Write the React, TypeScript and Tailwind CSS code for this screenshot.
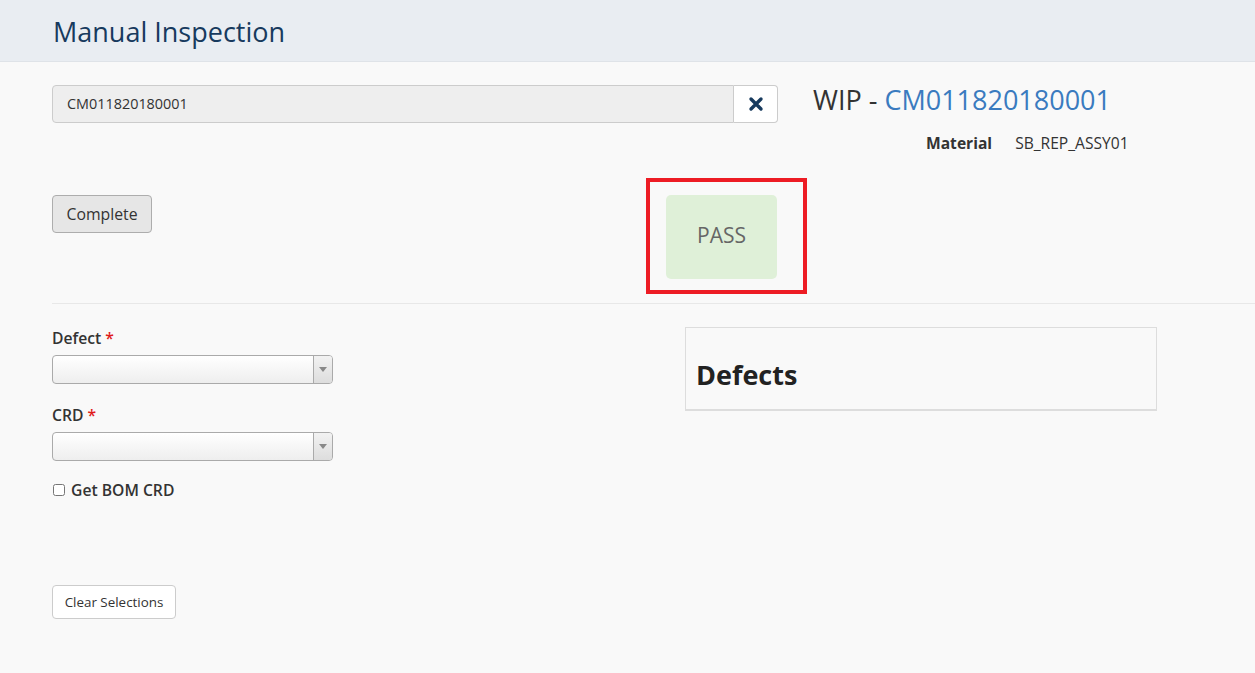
import { useState } from 'react'

function Caret() {
  return (
    <svg width="8" height="5" viewBox="0 0 8 5" className="fill-[#888]">
      <path d="M0 0h8L4 5z" />
    </svg>
  )
}

function ComboBox() {
  return (
    <div className="flex h-[29px] w-[281px] overflow-hidden rounded-[4px] border border-[#aaa] bg-gradient-to-b from-white to-[#eee]">
      <div className="flex-1" />
      <div className="flex w-[19px] items-center justify-center border-l border-[#aaa] bg-gradient-to-b from-[#f2f2f2] to-[#ddd]">
        <Caret />
      </div>
    </div>
  )
}

export default function App() {
  const [wip, setWip] = useState('CM011820180001')
  const [bom, setBom] = useState(false)

  return (
    <div className="min-h-screen bg-[#f9f9f9] font-['Open_Sans',sans-serif] text-[#333]">
      <header className="flex h-[62px] items-center border-b border-[#dfe3e8] bg-[#e9edf2] pl-[53px] pt-[2px]">
        <h1 className="text-[27px] leading-none text-[#173a5e]">Manual Inspection</h1>
      </header>

      <div className="pl-[52px]">
        <div className="flex pt-[23px]">
          <div className="w-[726px]">
            <div className="flex h-[38px]">
              <input
                value={wip}
                onChange={(e) => setWip(e.target.value)}
                className="flex-1 rounded-l-[4px] border border-[#ccc] bg-[#eee] px-[14px] text-[14.4px] text-[#333] outline-none"
              />
              <button className="flex w-[44px] items-center justify-center rounded-r-[4px] border border-l-0 border-[#ccc] bg-white">
                <svg width="16" height="16" viewBox="0 0 16 16">
                  <path d="M3 3l10 10M13 3L3 13" stroke="#173a5e" strokeWidth="3.4" strokeLinecap="round" />
                </svg>
              </button>
            </div>

            <div className="mt-[72px] flex items-start">
              <button className="h-[38px] w-[100px] rounded-[4px] border border-[#adadad] bg-[#e6e6e6] pt-[2px] text-[15.8px] text-[#333]">
                Complete
              </button>
              <div className="relative ml-[514px]">
                <div className="flex h-[84px] w-[111px] items-center justify-center rounded-[5px] bg-[#dff0d8] pb-[3px] text-[21px] text-[#666]">
                  PASS
                </div>
                <div className="absolute left-[-20px] top-[-17px] h-[116px] w-[161px] border-4 border-[#ed1c24]" />
              </div>
            </div>
          </div>

          <div className="ml-[35px] mt-[-2px]">
            <h2 className="text-[27px] leading-[34px] text-[#333]">
              WIP - <span className="text-[#3a7bbf]">CM011820180001</span>
            </h2>
            <div className="ml-[113px] mt-[16px] flex text-[15.6px] leading-5">
              <span className="font-bold">Material</span>
              <span className="ml-[23px]">SB_REP_ASSY01</span>
            </div>
          </div>
        </div>

        <div className="mt-[24px] border-t border-[#e8e8e8]" />

        <div className="flex pt-[23px]">
          <div className="w-[633px] pt-[1px]">
            <label className="block text-[15.7px] font-semibold leading-5">
              Defect <span className="text-[#e01b1b]">*</span>
            </label>
            <div className="mt-[7px]">
              <ComboBox />
            </div>

            <label className="mt-[21px] block text-[15.7px] font-semibold leading-5">
              CRD <span className="text-[#e01b1b]">*</span>
            </label>
            <div className="mt-[7px]">
              <ComboBox />
            </div>

            <label className="mt-[19px] flex items-center text-[15.7px] font-semibold leading-5">
              <input
                type="checkbox"
                checked={bom}
                onChange={(e) => setBom(e.target.checked)}
                className="ml-[1px] mr-[6px] h-[12px] w-[12px]"
              />
              Get BOM CRD
            </label>

            <button className="mt-[85px] h-[34px] w-[124px] rounded-[4px] border border-[#ccc] bg-white text-[13.4px] text-[#333]">
              Clear Selections
            </button>
          </div>

          <div className="h-[84px] w-[472px] border border-b-2 border-[#ddd] px-[10px] pt-[32px]">
            <h3 className="text-[27px] font-bold leading-[1.1] text-[#222]">Defects</h3>
          </div>
        </div>
      </div>
    </div>
  )
}
